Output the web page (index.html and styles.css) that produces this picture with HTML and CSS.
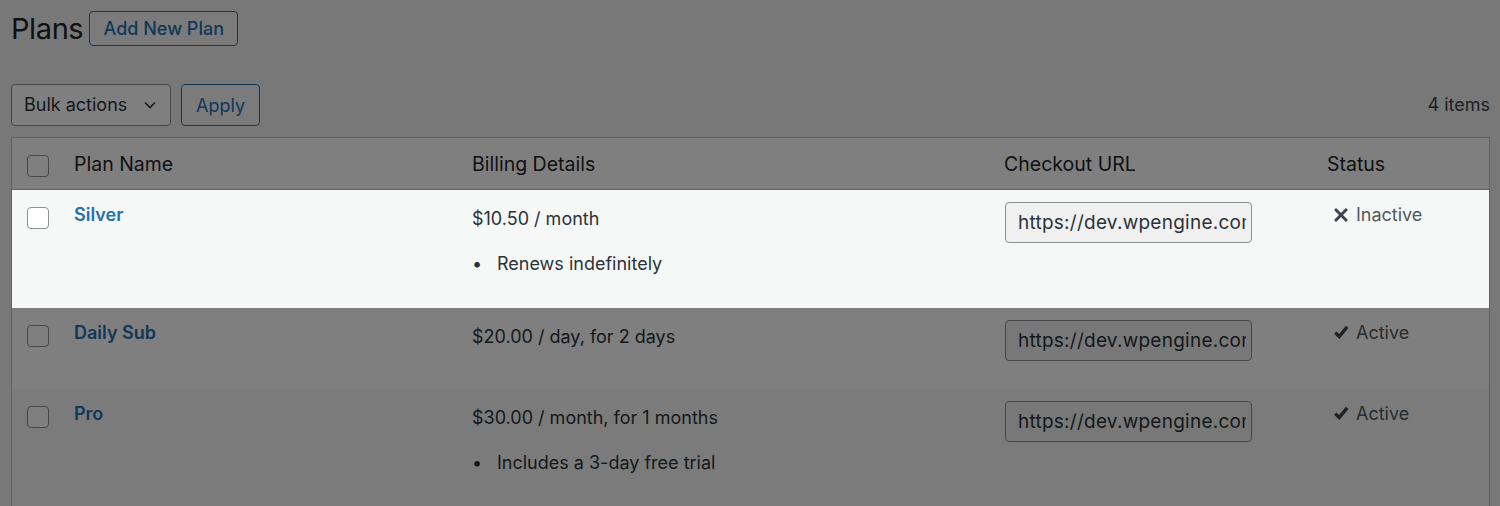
FILE: index.html
```html
<!DOCTYPE html>
<html lang="en">
<head>
<meta charset="utf-8">
<title>Plans</title>
<link rel="stylesheet" href="styles.css">
</head>
<body>
<div class="wrap">
  <div class="page-head">
    <h1 class="page-title">Plans</h1>
    <a class="btn btn-outline" href="#">Add New Plan</a>
  </div>

  <div class="tablenav">
    <div class="bulk">
      <div class="select">
        <span>Bulk actions</span>
        <svg class="chev" width="14" height="14" viewBox="0 0 14 14"><path d="M2 4.5 L7 9.5 L12 4.5" fill="none" stroke="currentColor" stroke-width="1.6"/></svg>
      </div>
      <button class="btn btn-apply" type="button">Apply</button>
    </div>
    <span class="count">4 items</span>
  </div>

  <table class="list">
    <thead>
      <tr>
        <th class="col-cb"><span class="cb"></span></th>
        <th class="col-name">Plan Name</th>
        <th class="col-billing">Billing Details</th>
        <th class="col-url">Checkout URL</th>
        <th class="col-status">Status</th>
      </tr>
    </thead>
    <tbody>
      <tr class="row-alt is-focused">
        <td class="col-cb"><span class="cb"></span></td>
        <td><a class="plan-link" href="#">Silver</a></td>
        <td>
          <p class="price">$10.50 / month</p>
          <ul class="notes"><li>Renews indefinitely</li></ul>
        </td>
        <td><input class="url" type="text" readonly value="https://dev.wpengine.com/checkout/?plan=silver"></td>
        <td>
          <span class="status">
            <svg width="22" height="22" viewBox="0 0 20 20"><path d="M4.6 4.6 L15.4 15.4 M15.4 4.6 L4.6 15.4" stroke="currentColor" stroke-width="2.6" fill="none"/></svg>
            Inactive
          </span>
        </td>
      </tr>
      <tr>
        <td class="col-cb"><span class="cb"></span></td>
        <td><a class="plan-link" href="#">Daily Sub</a></td>
        <td>
          <p class="price">$20.00 / day, for 2 days</p>
        </td>
        <td><input class="url" type="text" readonly value="https://dev.wpengine.com/checkout/?plan=daily-sub"></td>
        <td>
          <span class="status">
            <svg width="22" height="22" viewBox="0 0 20 20"><path d="M4.8 9.6 L8.4 13.2 L15.6 4.4" stroke="currentColor" stroke-width="3" fill="none"/></svg>
            Active
          </span>
        </td>
      </tr>
      <tr class="row-alt">
        <td class="col-cb"><span class="cb"></span></td>
        <td><a class="plan-link" href="#">Pro</a></td>
        <td>
          <p class="price">$30.00 / month, for 1 months</p>
          <ul class="notes"><li>Includes a 3-day free trial</li></ul>
        </td>
        <td><input class="url" type="text" readonly value="https://dev.wpengine.com/checkout/?plan=pro"></td>
        <td>
          <span class="status">
            <svg width="22" height="22" viewBox="0 0 20 20"><path d="M4.8 9.6 L8.4 13.2 L15.6 4.4" stroke="currentColor" stroke-width="3" fill="none"/></svg>
            Active
          </span>
        </td>
      </tr>
    </tbody>
  </table>
</div>
<div class="backdrop"></div>
</body>
</html>
```

FILE: styles.css
```css
html {
  overflow: hidden;
}

body {
  margin: 0;
  background: #f0f0f1;
  color: #3c434a;
  font-family: Inter, "Noto Sans", "Liberation Sans", sans-serif;
  font-size: 18px;
  line-height: 26px;
}

.wrap {
  padding: 11px 10px 0 11px;
}

.page-head {
  display: flex;
  align-items: center;
  gap: 6px;
  height: 35px;
}

.page-title {
  margin: 0;
  font-size: 29px;
  font-weight: 400;
  line-height: 35px;
  color: #1d2327;
  letter-spacing: -0.4px;
}

.btn {
  box-sizing: border-box;
  display: inline-flex;
  align-items: center;
  justify-content: center;
  border: 1px solid #2271b1;
  border-radius: 4px;
  background: #f6f7f7;
  color: #2271b1;
  font-family: inherit;
  text-decoration: none;
}

.btn-outline {
  width: 149px;
  height: 35px;
  font-size: 18px;
  font-weight: 500;
}

.tablenav {
  display: flex;
  align-items: center;
  justify-content: space-between;
  margin-top: 38px;
  height: 42px;
}

.bulk {
  display: flex;
  gap: 10px;
}

.select {
  box-sizing: border-box;
  width: 160px;
  height: 42px;
  display: flex;
  align-items: center;
  justify-content: space-between;
  padding: 0 13px 0 12px;
  border: 1px solid #8c8f94;
  border-radius: 4px;
  background: #fff;
  color: #2c3338;
}

.chev {
  color: #2c3338;
}

.btn-apply {
  width: 79px;
  height: 42px;
  font-size: 18px;
  font-weight: 400;
  padding: 0;
}

.count {
  color: #3c434a;
  font-size: 18px;
}

.list {
  margin-top: 11px;
  width: 1479px;
  table-layout: fixed;
  border-spacing: 0;
  border: 1px solid #c3c4c7;
  background: #fff;
}

.list th {
  text-align: left;
  font-weight: 400;
  font-size: 19.5px;
  color: #1d2327;
  padding: 13px 12px 12px;
  border-bottom: 1px solid #c3c4c7;
  vertical-align: top;
}

.list td {
  padding: 12px 12px 21px;
  vertical-align: top;
}

.list th.col-cb,
.list td.col-cb {
  padding-left: 15px;
  padding-right: 0;
}

.col-cb { width: 35px; }
.col-name { width: 374px; }
.col-billing { width: 508px; }
.col-url { width: 299px; }

.cb {
  display: block;
  box-sizing: border-box;
  width: 22px;
  height: 22px;
  border: 1px solid #8c8f94;
  border-radius: 4px;
  background: #fff;
}

.list th .cb {
  margin-top: 4px;
}

.list td .cb {
  margin-top: 5px;
}

.row-alt td {
  background: #f6f7f7;
}

.is-focused td {
  position: relative;
  z-index: 2;
}

.plan-link {
  color: #2271b1;
  font-weight: 600;
  text-decoration: none;
}

.price {
  margin: 4px 0 18px;
  color: #2c3338;
}

.notes {
  margin: 19px 0 10px;
  padding: 0;
  list-style: none;
  color: #2c3338;
}

.notes li {
  display: flex;
}

.notes li::before {
  content: "\2022";
  width: 25px;
  flex: none;
}

.url {
  box-sizing: border-box;
  width: 247px;
  height: 41px;
  margin: 0 0 0 1px;
  padding: 0 5px 0 12px;
  border: 1px solid #8c8f94;
  border-radius: 4px;
  background: #f0f0f1;
  color: #2c3338;
  font-family: inherit;
  font-size: 19px;
  letter-spacing: 0.25px;
}

.status {
  display: flex;
  align-items: center;
  gap: 4px;
  color: #50575e;
}

.status svg {
  margin-left: 3px;
  color: #3c434a;
}

.backdrop {
  position: fixed;
  inset: 0;
  background: rgba(0, 0, 0, 0.5);
  z-index: 1;
}
```
